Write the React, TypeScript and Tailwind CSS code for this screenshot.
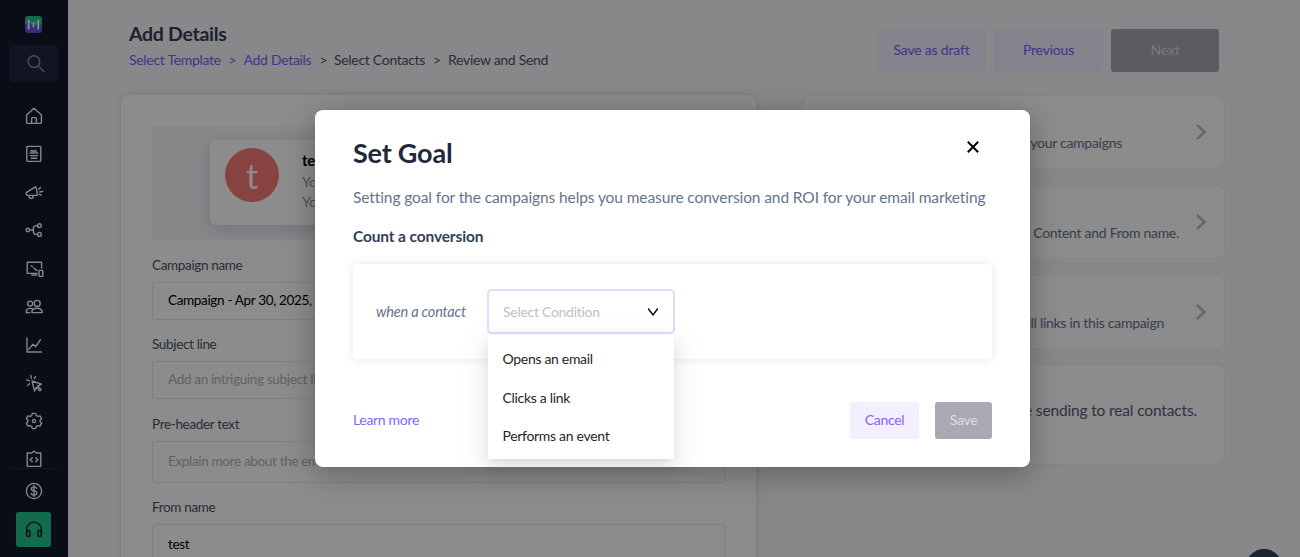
import type { ReactNode } from "react";

const NAV_ICONS: { name: string; art: ReactNode }[] = [
  { name: "Home", art: <path d="M1.6 8 9 1.2 16.4 8v7.6q0 .8-.8.8H2.4q-.8 0-.8-.8zM6.6 16.4v-5q0-.8.8-.8h3.2q.8 0 .8.8v5" /> },
  {
    name: "Templates",
    art: (
      <>
        <rect x="1.8" y="1.4" width="14" height="15" rx="1" />
        <path d="M5.2 8h7.4M5.2 10.6h7.4M6.2 13.2h5.4" />
        <path d="m5.8 6.2 1.4-.8.8.8h1.4l1-.8.8.8" />
      </>
    ),
  },
  {
    name: "Campaigns",
    art: (
      <>
        <path d="m1.2 9.6 9.2-5.8q1.6 1.6 1.8 8.600L2.200 12.200Q.8 11 1.200 9.600z" />
        <path d="M3.800 12.600q.4 3 2.800 2.800 2-.4 1.600-2.800M14 6.200l1.400-1.800M14.800 9l3-.6M14.200 11.200l2 1" />
      </>
    ),
  },
  {
    name: "Automations",
    art: (
      <>
        <circle cx="2.8" cy="9" r="1.7" />
        <circle cx="14.4" cy="4.6" r="1.9" />
        <circle cx="14.4" cy="13.4" r="1.9" />
        <path d="M4.7 9h3.5M12.4 4.6h-1q-3 .2-3 2.4v4q0 2.200 3 2.400h1" />
      </>
    ),
  },
  {
    name: "Sites",
    art: (
      <>
        <path d="M12 13.400H2.200V2.200h14.400V8M6.800 15h5M6.400 5.800l1 .8M9 8l3 2.600" />
        <rect x="14" y="10.4" width="3.8" height="6" rx=".6" />
      </>
    ),
  },
  {
    name: "Contacts",
    art: (
      <>
        <circle cx="5.2" cy="5.6" r="2.5" />
        <circle cx="12.2" cy="5.4" r="3" />
        <path d="M6.800 14.600q0-4.400 5.200-4.400t5.200 4.400zM4.600 14.600H1.200q-.2-4.200 4.200-4.200 1.400 0 2.200.6" />
      </>
    ),
  },
  { name: "Analytics", art: <path d="M2 2v14h14.400M3.600 13.600l4.400-5.400 2.800 2.400L15.400 3.600" /> },
  {
    name: "Events",
    art: <path d="m7 7 9.400 3.200-3.800 1.800 3.600 3.600-1.200 1.200-3.600-3.600L9.600 17zM5.800 1.400l.6 2.800M1.600 6l2.800.6M2.600 11.400l1.800-1.600M10.400 2.600 9.400 4.600" />,
  },
  {
    name: "Settings",
    art: (
      <>
        <path d="m7.400 1.400h3.200l.7 2.100 1.500.9 2.200-.5 1.600 2.800-1.500 1.600v1.400l1.500 1.600-1.600 2.800-2.200-.5-1.500.9-.7 2.100H7.400l-.7-2.100-1.500-.9-2.200.5-1.600-2.800 1.500-1.600V8.300L1.400 6.700 3 3.900l2.200.5 1.500-.9z" />
        <circle cx="9" cy="9" r="1.6" />
      </>
    ),
  },
  {
    name: "Developers",
    art: <path d="M6.400 3H2.200v13.400h13.600V3h-4.200M6.400 3q.6 0 1-.6.600-1 1.600-1t1.600 1q.4.6 1 .6M7.200 7.800 5.200 9.800l2 2M10.800 7.800l2 2-2 2" />,
  },
];

const FIELDS = [
  { label: "Campaign name", value: "Campaign - Apr 30, 2025, 03:12 PM", filled: true, box: "h-[38px]", gap: "mt-[15px]" },
  { label: "Subject line", value: "Add an intriguing subject line", filled: false, box: "h-[38px]", gap: "mt-[14px]" },
  { label: "Pre-header text", value: "Explain more about the email", filled: false, box: "h-[42px]", gap: "mt-[15px]" },
  { label: "From name", value: "test", filled: true, box: "h-[42px]", gap: "mt-[14px]" },
];

const TOOLS = [
  { text: "your campaigns", pad: "pr-[102px]" },
  { text: "Content and From name.", pad: "pr-[45px]" },
  { text: "all links in this campaign", pad: "pr-[60px]" },
];

const CONDITIONS = ["Opens an email", "Clicks a link", "Performs an event"];

function Icon({ children, className = "" }: { children: ReactNode; className?: string }) {
  return (
    <svg
      viewBox="0 0 18 18"
      className={`h-[18px] w-[18px] shrink-0 overflow-visible ${className}`}
      fill="none"
      stroke="currentColor"
      strokeWidth="1.4"
      strokeLinejoin="round"
      strokeLinecap="round"
    >
      {children}
    </svg>
  );
}

function Sidebar() {
  return (
    <aside className="flex h-full w-[68px] shrink-0 flex-col items-center bg-[#121929] pt-4 pr-px text-[#f3f4f8]">
      <svg viewBox="0 0 17 17" className="h-[17px] w-[17px]">
        <defs>
          <clipPath id="logo">
            <rect width="17" height="17" rx="3.5" />
          </clipPath>
        </defs>
        <g clipPath="url(#logo)">
          <rect width="17" height="17" fill="#6358e0" />
          <path d="M0 0h17v8q-3 2-8.5 0T0 8.5z" fill="#22c48a" />
        </g>
        <path d="M3.7 4.5v8M13.3 4.5v8M8.5 6.8v3.6" stroke="#fff" strokeWidth="1.8" strokeLinecap="round" />
        <path d="M6.2 5.8v2.2M10.8 5.8v2.2" stroke="#fff" strokeOpacity=".5" strokeLinecap="round" />
      </svg>
      <div className="mt-3 flex h-[37px] w-[49px] items-center justify-center rounded-sm bg-[#202540] pl-[5px] text-[#8891a8]">
        <Icon>
          <circle cx="7" cy="6.6" r="5.8" />
          <path d="m11.3 10.9 5.7 5.5" />
        </Icon>
      </div>
      <nav className="mt-[15px] flex h-[372px] w-[49px] flex-col items-center overflow-hidden border-b border-[#272d45]">
        {NAV_ICONS.map((i) => (
          <a key={i.name} title={i.name} className="flex h-[38.15px] shrink-0 items-center">
            <Icon>{i.art}</Icon>
          </a>
        ))}
      </nav>
      <Icon className="mt-[13px]">
        <circle cx="9" cy="9" r="7.6" />
        <path d="M11.8 6.3Q11.2 4.9 9 4.9 6.4 4.9 6.4 6.9 6.4 8.6 9 8.900q2.800.4 2.800 2.200 0 2-2.800 2-2.400 0-2.800-1.600M9 3.400v11.200" />
      </Icon>
      <div className="mt-3 flex h-[35px] w-[35px] shrink-0 items-center justify-center rounded-[3px] bg-[#22c38a] text-[#121929]">
        <Icon>
          <path d="M1.6 13V8.5a7.4 7.4 0 0 1 14.8 0V13" />
          <rect x="1.6" y="9.5" width="3.4" height="6" rx="1.5" />
          <rect x="13" y="9.5" width="3.4" height="6" rx="1.5" />
        </Icon>
      </div>
    </aside>
  );
}

function Header() {
  return (
    <header className="flex h-[95px] shrink-0 justify-between pr-[81px] pl-[61px]">
      <div className="pt-[21px]">
        <h1 className="text-[19.5px] leading-[26px] font-bold tracking-[-0.3px] text-[#334155]">Add Details</h1>
        <p className="flex pt-[3px] text-[14px] leading-5 tracking-[-0.3px] text-[#475569]">
          <span className="w-[99.5px] text-[#7c5cfa]">Select Template</span>
          <span className="w-[15px] text-[#7c5cfa]">&gt;</span>
          <span className="w-[76px] text-[#7c5cfa]">Add Details</span>
          <span className="w-[14.5px]">&gt;</span>
          <span className="w-[99px]">Select Contacts</span>
          <span className="w-[15px]">&gt;</span>
          <span>Review and Send</span>
        </p>
      </div>
      <div className="flex gap-2 pt-[29px] text-[14px] tracking-[-0.19px]">
        <button className="h-[43px] w-[109px] rounded-[3px] bg-[#f2eeff] pb-0.5 text-[#7c5cfa]">Save as draft</button>
        <button className="h-[43px] w-[109px] rounded-[3px] bg-[#f2eeff] pb-0.5 text-[#7c5cfa]">Previous</button>
        <button className="h-[43px] w-[108px] rounded-[3px] bg-[#a9a6b1] pb-0.5 text-[#dcdce0]">Next</button>
      </div>
    </header>
  );
}

function DetailsForm() {
  return (
    <section className="h-[520px] w-[635px] rounded-lg bg-white px-[31px] pt-[31px] shadow-[0_0_8px_rgba(30,30,90,0.12)]">
      <div className="h-[114px] bg-[#f5f7fa] pt-[14px] pl-[58px]">
        <div className="flex h-[85px] w-[440px] rounded-md bg-white pt-2 pl-[15px] shadow-[0_4px_16px_rgba(50,60,90,0.2)]">
          <div className="flex h-[54px] w-[54px] items-center justify-center rounded-full bg-[#f87979] text-[34px] text-white">t</div>
          <div className="pl-[23px] text-[14px] leading-[20px] tracking-[-0.3px] text-[#8a97ab]">
            <p className="pt-[2px] text-[15px] font-bold text-black">test</p>
            <p className="pt-[2px]">Your</p>
            <p>Your</p>
          </div>
        </div>
      </div>
      {FIELDS.map((f) => (
        <div key={f.label} className={f.gap}>
          <p className="text-[13.5px] leading-[20px] tracking-[-0.34px] text-[#475569]">{f.label}</p>
          <div
            className={`mt-[7px] flex items-center rounded-[3px] border border-[#e6e8ee] pb-px pl-[15px] text-[13.5px] tracking-[-0.33px] ${f.box} ${f.filled ? "text-black" : "text-[#a9b3c4]"}`}
          >
            {f.value}
          </div>
        </div>
      ))}
    </section>
  );
}

function Tools() {
  return (
    <section className="flex w-[422px] flex-col gap-4 text-[#64748b]">
      {TOOLS.map((t) => (
        <div key={t.text} className="relative h-[74px] rounded-lg border border-[#f0f0f4] bg-white">
          <p className={`pt-[37px] text-right text-[14px] leading-5 tracking-[-0.28px] ${t.pad}`}>{t.text}</p>
          <svg viewBox="0 0 10 16" className="absolute top-7 right-[18px] h-4 w-[10px] fill-none stroke-[#bcbcc0] stroke-[2.5]">
            <path d="m1 1 7.5 7L1 15" />
          </svg>
        </div>
      ))}
      <div className="-mt-px h-[101px] rounded-lg border border-[#f0f0f4] bg-white">
        <p className="pt-[35px] pr-[27px] text-right text-[15.5px] leading-5 tracking-[-0.15px] text-[#526075]">before sending to real contacts.</p>
      </div>
    </section>
  );
}

function GoalDialog() {
  return (
    <div className="mt-[110px] ml-[315px] h-[357px] w-[715px] rounded-lg bg-white px-[38px] pt-[25px] shadow-[0_6px_30px_rgba(0,0,0,0.3)]">
      <div className="flex justify-between">
        <h2 className="text-[27px] leading-[36px] font-bold tracking-[-0.2px] text-[#1e293b]">Set Goal</h2>
        <svg viewBox="0 0 12 12" className="mt-[6px] mr-[13px] h-3 w-3 fill-none stroke-black stroke-2">
          <path d="m.8.8 10.4 10.4M11.2.8.8 11.2" />
        </svg>
      </div>
      <p className="mt-4 text-[15.5px] leading-5 tracking-[-0.097px] whitespace-nowrap text-[#64748b]">
        Setting goal for the campaigns helps you measure conversion and ROI for your email marketing
      </p>
      <h3 className="mt-[19px] text-[15.5px] leading-5 font-bold tracking-[-0.13px] text-[#334155]">Count a conversion</h3>
      <div className="mt-[18px] flex h-[95px] w-[639px] items-center rounded-[3px] pl-[23px] shadow-[0_0_8px_rgba(30,60,60,0.12)]">
        <span className="w-[111px] text-[14.5px] tracking-[-0.2px] text-[#64748b] italic">when a contact</span>
        <div className="relative h-[45px] w-[188px] rounded-[5px] border-[2.5px] border-[#dfdcff]">
          <div className="flex h-full items-center justify-between pr-[14px] pl-[14px] text-[14px] tracking-[-0.28px] text-[#bfbfbf]">
            Select Condition
            <svg viewBox="0 0 12 8" className="h-2 w-3 fill-none stroke-black stroke-[1.3]">
              <path d="m1.2.5 4.8 6.5L10.8.5" />
            </svg>
          </div>
          <ul className="absolute top-[44px] -left-px w-[186px] rounded-[2px] bg-white pt-[4px] pb-[5px] shadow-[0_3px_6px_-4px_rgba(0,0,0,.12),0_6px_16px_rgba(0,0,0,.08),0_9px_28px_8px_rgba(0,0,0,.05)]">
            {CONDITIONS.map((c) => (
              <li key={c} className="flex h-[38.4px] items-center pt-px pl-[14.5px] text-[14px] tracking-[-0.31px] text-[#1f1f1f]">
                {c}
              </li>
            ))}
          </ul>
        </div>
      </div>
      <div className="mt-[43px] flex items-center text-[14px] tracking-[-0.32px]">
        <a className="mr-auto pb-0.5 text-[#8266ff]">Learn more</a>
        <button className="h-[37px] w-[69px] rounded-[3px] bg-[#f3efff] pb-0.5 text-[#8266ff]">Cancel</button>
        <button className="ml-4 h-[37px] w-[57px] rounded-[3px] bg-[#aaa8b3] pb-0.5 text-[#dedee2]">Save</button>
      </div>
    </div>
  );
}

export default function App() {
  return (
    <div className="relative flex h-[557px] w-[1300px] overflow-hidden bg-[#f8f8fb] font-['Lato',sans-serif]">
      <Sidebar />
      <main className="flex-1">
        <Header />
        <div className="flex gap-[47px] pl-[53px]">
          <DetailsForm />
          <Tools />
        </div>
      </main>
      <div className="absolute top-[549px] left-[1246px] h-9 w-9 rounded-full bg-[#35435a]" />
      <div className="absolute inset-0 bg-black/45">
        <GoalDialog />
      </div>
    </div>
  );
}
